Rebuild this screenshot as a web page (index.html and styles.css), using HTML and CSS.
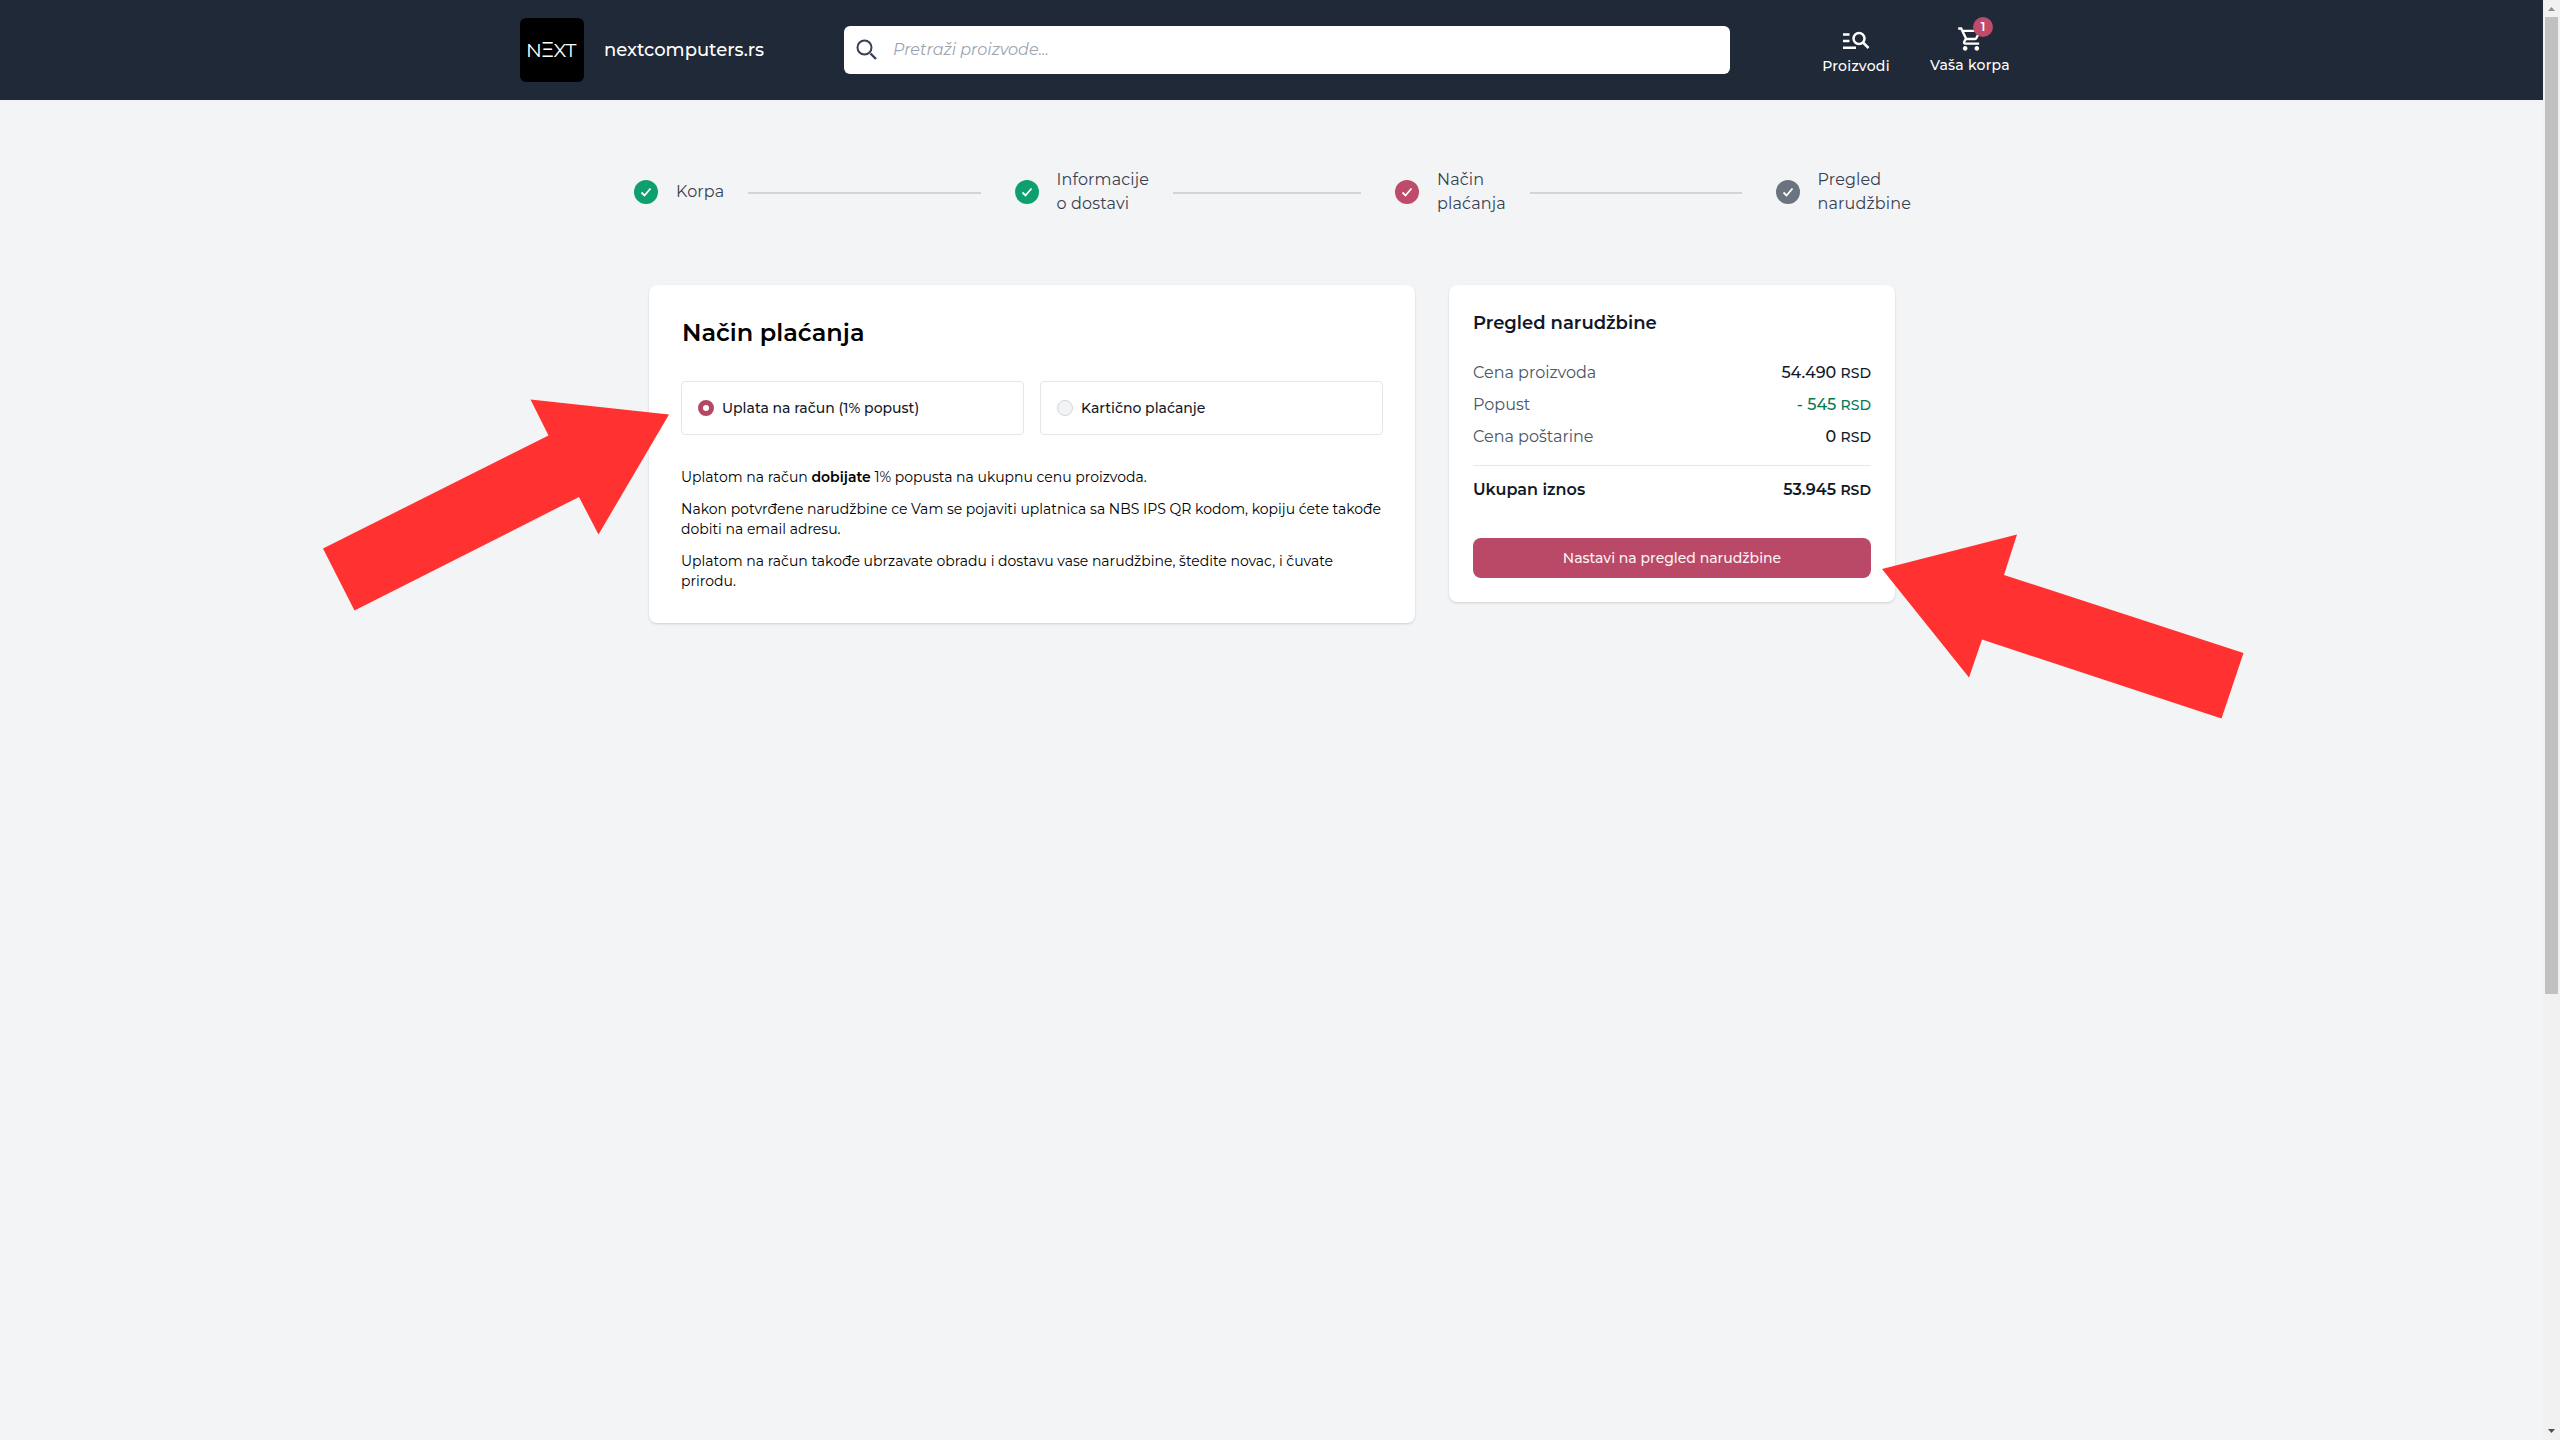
FILE: index.html
```html
<!DOCTYPE html>
<html lang="sr">
<head>
<meta charset="utf-8">
<title>nextcomputers.rs – Način plaćanja</title>
<link rel="stylesheet" href="styles.css">
</head>
<body>
<div class="page">
  <header class="header">
    <a class="logo"><span>NΞXT</span></a>
    <span class="brand">nextcomputers.rs</span>
    <div class="search">
      <svg width="24" height="24" viewBox="0 0 24 24" fill="none" stroke="#374151" stroke-width="2"><circle cx="9.500" cy="9.500" r="7"/><path d="M15.500 15.500l5.500 5.500" stroke-width="2.400"/></svg>
      <span class="placeholder">Pretraži proizvode...</span>
    </div>
    <nav class="nav">
      <a class="nav-item products">
        <svg width="28" height="24" viewBox="0 0 28 24" fill="none" stroke="#fff" stroke-width="2.500"><path d="M1 5.500h6.500M1 12h6.500M1 18.800h13"/><circle cx="17" cy="9.500" r="5.500"/><path d="M21 13.500l5.500 5.500"/></svg>
        <span>Proizvodi</span>
      </a>
      <a class="nav-item cart">
        <svg width="28" height="28" viewBox="0 0 24 24" fill="#fff"><path d="M15.550 13c.75 0 1.410-.41 1.750-1.030l3.580-6.490A.996.996 0 0 0 20.010 4H5.210l-.94-2H1v2h2l3.600 7.590-1.350 2.440C4.520 15.370 5.480 17 7 17h12v-2H7l1.100-2h7.450zM6.160 6h12.150l-2.760 5H8.530L6.160 6zM7 18c-1.100 0-1.990.9-1.990 2S5.900 22 7 22s2-.9 2-2-.9-2-2-2zm10 0c-1.100 0-1.990.9-1.990 2s.89 2 1.990 2 2-.9 2-2-.9-2-2-2z"/></svg>
        <span>Vaša korpa</span>
        <b class="badge">1</b>
      </a>
    </nav>
  </header>

  <ol class="steps">
    <li class="step done"><i class="dot"><svg viewBox="0 0 24 24"><path d="M7.500 12.500l3 3 6-7"/></svg></i><span class="label">Korpa</span><i class="line"></i></li>
    <li class="step done"><i class="dot"><svg viewBox="0 0 24 24"><path d="M7.500 12.500l3 3 6-7"/></svg></i><span class="label">Informacije<br>o dostavi</span><i class="line"></i></li>
    <li class="step current"><i class="dot"><svg viewBox="0 0 24 24"><path d="M7.500 12.500l3 3 6-7"/></svg></i><span class="label">Način<br>plaćanja</span><i class="line"></i></li>
    <li class="step"><i class="dot"><svg viewBox="0 0 24 24"><path d="M7.500 12.500l3 3 6-7"/></svg></i><span class="label">Pregled<br>narudžbine</span></li>
  </ol>

  <main class="main">
    <section class="card payment">
      <h1>Način plaćanja</h1>
      <div class="options">
        <label class="option"><i class="radio checked"></i><span>Uplata na račun (1% popust)</span></label>
        <label class="option"><i class="radio"></i><span>Kartično plaćanje</span></label>
      </div>
      <div class="info">
        <p>Uplatom na račun <b>dobijate</b> 1% popusta na ukupnu cenu proizvoda.</p>
        <p>Nakon potvrđene narudžbine ce Vam se pojaviti uplatnica sa NBS IPS QR kodom, kopiju ćete takođe<br>dobiti na email adresu.</p>
        <p>Uplatom na račun takođe ubrzavate obradu i dostavu vase narudžbine, štedite novac, i čuvate<br>prirodu.</p>
      </div>
    </section>
    <aside class="card summary">
      <h2>Pregled narudžbine</h2>
      <dl>
        <div><dt>Cena proizvoda</dt><dd>54.490 <small>RSD</small></dd></div>
        <div><dt>Popust</dt><dd class="discount">- 545 <small>RSD</small></dd></div>
        <div><dt>Cena poštarine</dt><dd>0 <small>RSD</small></dd></div>
        <div class="total"><dt>Ukupan iznos</dt><dd>53.945 <small>RSD</small></dd></div>
      </dl>
      <button class="submit" type="button">Nastavi na pregled narudžbine</button>
    </aside>
  </main>
</div>

<div class="scrollbar">
  <svg width="17" height="17" viewBox="0 0 17 17"><path d="M5 11h7L8.500 7z" fill="#8f8f8f"/></svg>
  <i class="thumb"></i>
  <svg class="down" width="17" height="17" viewBox="0 0 17 17"><path d="M5 6h7l-3.500 4z" fill="#505050"/></svg>
</div>

<svg class="arrows" width="2560" height="1440" viewBox="0 0 2560 1440" fill="#ff3131">
  <path d="M669 414.500L530.500 399.500 548.500 435.500 323 548.500 354.500 610.500 579 497 598.500 534.500z"/>
  <path d="M1882 569L2017 534.500 2004 575 2243.500 653 2221.500 718.500 1982 639.500 1969 677.500z"/>
</svg>
</body>
</html>
```
FILE: styles.css
```css
* { box-sizing: border-box; margin: 0; padding: 0; }

body {
  display: flex;
  height: 1440px;
  overflow: hidden;
  background: #f3f4f6;
  color: #111827;
  font-family: Montserrat, Inter, "Open Sans", sans-serif;
  font-size: 16px;
}

.page { flex: 1; }
svg { display: block; }

/* Header */
.header {
  display: flex;
  align-items: center;
  height: 100px;
  padding: 0 520px;
  background: #1f2937;
  color: #fff;
}
.logo {
  display: flex;
  align-items: center;
  justify-content: center;
  width: 64px;
  height: 64px;
  padding-right: 2px;
  border-radius: 6px;
  background: #000;
  font-size: 19.5px;
  font-weight: 400;
  letter-spacing: -0.5px;
}
.brand {
  width: 240px;
  padding: 0 0 1px 20px;
  font-size: 18px;
  font-weight: 500;
}
.search {
  display: flex;
  align-items: center;
  gap: 14px;
  width: 886px;
  height: 48px;
  margin-left: 20px;
  flex: none;
  padding-left: 11px;
  border-radius: 6px;
  background: #fff;
}
.placeholder {
  padding-bottom: 2px;
  color: #9ca3af;
  font-style: italic;
}
.nav { display: flex; flex: none; align-self: flex-start; padding-top: 20px; }
.nav-item {
  position: relative;
  display: flex;
  flex-direction: column;
  align-items: center;
  font-size: 14px;
  font-weight: 500;
  line-height: 20px;
  letter-spacing: 0.25px;
  white-space: nowrap;
}
.products { width: 70px; margin-left: 91px; padding-top: 9px; gap: 3px; }
.cart { width: 84px; margin-left: 37px; padding-top: 5px; gap: 2px; }
.cart svg { margin-left: 2px; }
.badge {
  position: absolute;
  top: -3px;
  left: 45px;
  width: 20px;
  height: 20px;
  border-radius: 50%;
  background: #be4b69;
  font-size: 12px;
  font-weight: 600;
  letter-spacing: 0;
  text-align: center;
}

/* Checkout steps */
.steps {
  display: grid;
  grid-template-columns: repeat(4, 380.500px);
  padding: 68px 0 0 634px;
  list-style: none;
}
.step { display: flex; align-items: center; height: 48px; color: #374151; }
.label { margin-left: 18px; line-height: 24px; letter-spacing: 0.150px; white-space: nowrap; }
.dot { width: 24px; height: 24px; border-radius: 50%; background: #6b7280; }
.dot path { fill: none; stroke: #fff; stroke-width: 1.800; }
.done .dot { background: #0e9f6e; }
.current .dot { background: #be4b69; }
.line { flex: 1; height: 2px; margin: 1px 34px 0 24px; background: #d1d5db; }

/* Cards */
.main {
  display: flex;
  align-items: flex-start;
  gap: 34px;
  padding: 69px 0 0 649px;
}
.card {
  border-radius: 8px;
  background: #fff;
  box-shadow: 0 1px 3px rgba(0, 0, 0, 0.1), 0 1px 2px rgba(0, 0, 0, 0.06);
}
.payment { width: 766px; height: 338px; padding: 32px; }
h1 {
  padding-left: 1px;
  color: #000;
  font-size: 24px;
  font-weight: 600;
  line-height: 32px;
}
.options { display: flex; gap: 16px; margin-top: 32px; }
.option {
  display: flex;
  align-items: center;
  gap: 8px;
  width: 343px;
  height: 54px;
  padding-left: 16px;
  border: 1px solid #e5e7eb;
  border-radius: 4px;
  font-size: 14px;
  font-weight: 500;
}
.radio {
  width: 16px;
  height: 16px;
  border: 1px solid #d1d5db;
  border-radius: 50%;
  background: #f3f4f6;
}
.radio.checked { border: 5px solid #b44964; background: #fff; }
.info {
  display: flex;
  flex-direction: column;
  gap: 12px;
  margin-top: 32px;
  color: #000;
  font-size: 14px;
  line-height: 20px;
  white-space: nowrap;
}
.info b { font-weight: 600; }

.summary { width: 446px; height: 317px; padding: 24px; }
h2 {
  font-size: 18px;
  font-weight: 600;
  line-height: 28px;
}
dl { margin-top: 20px; }
dl div { display: flex; justify-content: space-between; height: 32px; line-height: 32px; }
dt { color: #4b5563; }
dd { font-weight: 500; white-space: nowrap; }
dd small { font-size: 14px; }
dd.discount { color: #057a55; }
dl .total {
  height: 52px;
  margin-top: 12px;
  border-top: 1px solid #e5e7eb;
  line-height: 48px;
}
.total dt, .total dd { color: #111827; font-weight: 600; }
.submit {
  width: 398px;
  height: 40px;
  margin-top: 21px;
  border: 0;
  border-radius: 8px;
  background: #b94966;
  color: #fdf2f5;
  font-family: inherit;
  font-size: 14px;
  font-weight: 500;
}

/* Scrollbar */
.scrollbar {
  display: flex;
  flex-direction: column;
  width: 17px;
  height: 1440px;
  background: #f1f1f1;
}
.thumb { width: 13px; height: 977px; margin-left: 2px; background: #c1c1c1; }
.down { margin-top: auto; }

/* Pointers drawn over the page */
.arrows { position: absolute; top: 0; left: 0; pointer-events: none; }
```
